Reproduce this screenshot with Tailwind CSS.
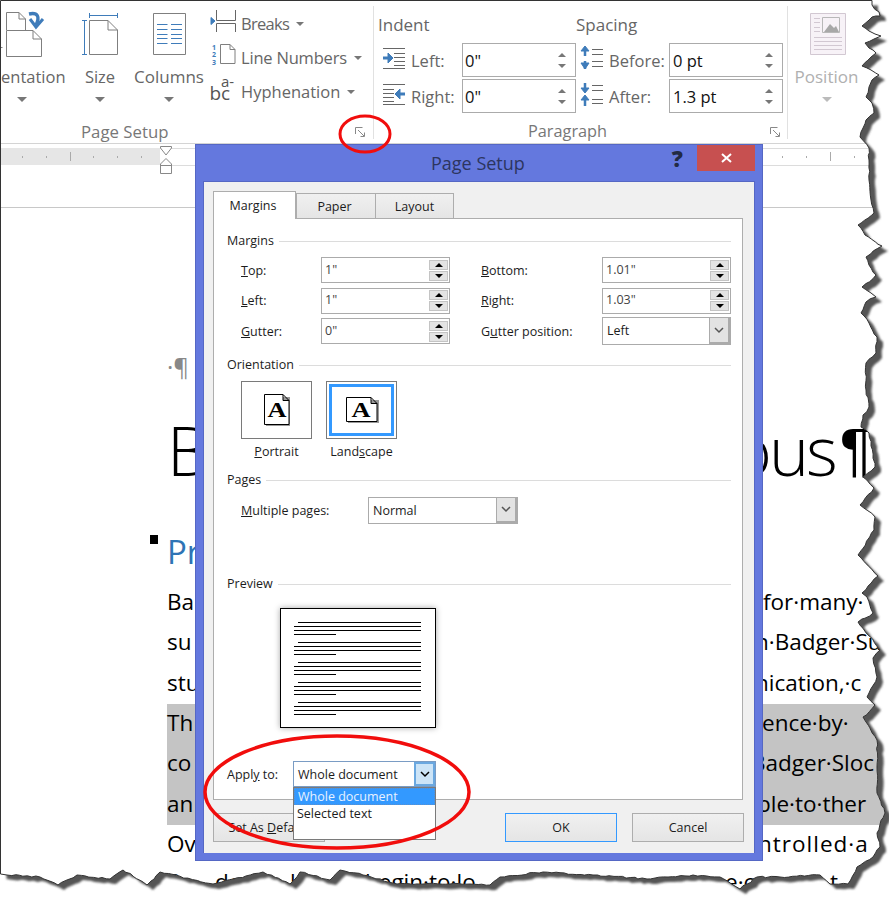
<!DOCTYPE html>
<html lang="en">
<head>
  <meta charset="UTF-8" />
  <title>Page Setup</title>
  <script src="https://cdn.jsdelivr.net/npm/@tailwindcss/browser@4"></script>
</head>
<body class="bg-white">
<div class="relative w-[889px] h-[897px] overflow-hidden bg-white font-['Open_Sans',sans-serif] text-[#1c1c1c]">

  <!-- ribbon -->
  <div class="flex h-[144px] border-b border-[#d4d4d4] text-[#666]">
    <div class="w-[374px] h-[133px] mt-[6px] border-r border-[#e1e1e1] flex flex-col">
      <div class="flex h-[114px]">
        <div class="w-[75px] flex flex-col items-center">
          <svg width="75" height="54" viewBox="0 6 75 54" fill="none" stroke="#7f7f7f">
            <path d="M6.5 30V12.5H19L25.5 19V30M19 12.5V19H25.5M6.5 30.5H33L41.5 39V56.5H6.5ZM33 30.5V39H41.5M0 47.5H2.5"/>
            <path d="M29 14C38 12 40 17 36 25" stroke="#3f7cba" stroke-width="3.4"/>
            <path d="M30 19L36 27L43 19" stroke="#3f7cba" stroke-width="3"/>
          </svg>
          <span class="self-start ml-[1px] mt-[5px] h-[24px] leading-[24px] text-[16.5px]">entation</span>
          <span class="self-start ml-[17px] mt-[8px] w-0 h-0 border-x-[5px] border-x-transparent border-t-[5px] border-t-[#777]"></span>
        </div>
        <div class="w-[50px] flex flex-col items-center">
          <svg width="50" height="54" viewBox="75 6 50 54" fill="none" stroke="#7f7f7f">
            <path d="M89.5 20.5H108L117.5 30V54.5H89.5ZM108 20.5V30H117.5"/>
            <path d="M89.5 13V18M117.5 13V18M89.5 15.5H117.5M82 20.5H87M84.5 20.5V54.5M82 54.5H87" stroke="#3f7cba"/>
          </svg>
          <span class="mt-[5px] h-[24px] leading-[24px] text-[16.5px]">Size</span>
          <span class="mt-[8px] w-0 h-0 border-x-[5px] border-x-transparent border-t-[5px] border-t-[#777]"></span>
        </div>
        <div class="w-[80px] ml-[4px] flex flex-col items-center">
          <svg width="80" height="54" viewBox="129 6 80 54" fill="none" stroke="#7f7f7f">
            <path d="M153.5 13.5H185.5V54.5H153.5Z"/>
            <path d="M157 24.5H167.5M157 29.5H167.5M157 34.5H167.5M157 38.5H167.5M157 43.5H167.5M171 24.5H182M171 29.5H182M171 34.5H182M171 38.5H182M171 43.5H182" stroke="#3f7cba"/>
          </svg>
          <span class="mt-[5px] h-[24px] leading-[24px] text-[17px] whitespace-nowrap">Columns</span>
          <span class="mt-[8px] w-0 h-0 border-x-[5px] border-x-transparent border-t-[5px] border-t-[#777]"></span>
        </div>
        <div class="flex flex-col text-[16.5px] mt-[1px]">
          <div class="flex items-center h-[34px]">
            <svg width="32" height="30" viewBox="209 9 32 30" fill="none" stroke="#666">
              <path d="M216.5 10V20.5H235.5V10M216.5 32V23.5H235.5V32"/>
              <path d="M211 17.5L215 21L211 24.5Z" fill="#3f7cba" stroke="#3f7cba"/>
            </svg>
            <span class="w-[55px] tracking-[-0.7px]">Breaks</span>
            <span class="w-0 h-0 border-x-[4px] border-x-transparent border-t-[4px] border-t-[#777]"></span>
          </div>
          <div class="flex items-center h-[34px]">
            <svg width="32" height="30" viewBox="209 43 32 30" fill="none" stroke="#7f7f7f">
              <path d="M220.5 44.5H230L235 49.5V63.5H220.5ZM230 44.5V49.5H235"/>
              <text x="212" y="50" font-size="7" font-weight="700" fill="#3f7cba" stroke="none">1</text>
              <text x="212" y="57" font-size="7" font-weight="700" fill="#3f7cba" stroke="none">2</text>
              <text x="212" y="65" font-size="7" font-weight="700" fill="#3f7cba" stroke="none">3</text>
            </svg>
            <span class="w-[113px] tracking-[-0.2px]">Line Numbers</span>
            <span class="w-0 h-0 border-x-[4px] border-x-transparent border-t-[4px] border-t-[#777]"></span>
          </div>
          <div class="flex items-center h-[34px]">
            <svg width="32" height="30" viewBox="209 77 32 30" fill="#555">
              <text x="221" y="87" font-size="15">a-</text>
              <text x="209.500" y="100" font-size="19">bc</text>
            </svg>
            <span class="w-[106px]">Hyphenation</span>
            <span class="w-0 h-0 border-x-[4px] border-x-transparent border-t-[4px] border-t-[#777]"></span>
          </div>
        </div>
      </div>
      <div class="flex items-center h-[19px] pt-[4px] text-[#777]">
        <span class="ml-[81px] text-[16.8px]">Page Setup</span>
        <svg class="ml-auto mr-[8px]" width="10" height="10" fill="none" stroke="#888"><path d="M.5 7V.5H7.5M3 3L9 9M5.5 9.500H9.500V5.500"/></svg>
      </div>
    </div>

    <div class="w-[414px] h-[133px] mt-[6px] border-r border-[#e1e1e1] flex flex-col">
      <div class="h-[114px] pl-[4px]">
        <div class="flex h-[37px] items-center text-[17px]">
          <span class="w-[198px]">Indent</span><span>Spacing</span>
        </div>
        <div class="grid grid-cols-[33px_51px_114px_33px_60px_114px] grid-rows-[34px_34px] gap-y-[2px] text-[16.5px] items-center">
          <svg width="33" height="34" fill="none" stroke="#666"><path d="M5 5.500H27M16 10.500H27M16 14.500H27M16 18.500H27M16 22.500H27M5 25.500H27"/><path d="M5 15H13" stroke="#3f7cba" stroke-width="3"/><path d="M10 10L15 15L10 20Z" fill="#3f7cba" stroke="#3f7cba"/></svg>
          <span class="pt-[2px]">Left:</span>
          <div class="flex h-[34px] items-center border border-[#ababab] bg-white">
            <span class="flex-1 pl-[2px] pt-[2px] text-[#111]">0"</span>
            <div class="flex flex-col gap-[7px] mr-[9px]">
              <span class="w-0 h-0 border-x-[4px] border-x-transparent border-b-[4px] border-b-[#777]"></span>
              <span class="w-0 h-0 border-x-[4px] border-x-transparent border-t-[4px] border-t-[#777]"></span>
            </div>
          </div>
          <svg width="33" height="34" fill="none" stroke="#666"><path d="M16 6.500H27M16 11.500H27M16 18.500H27M16 23.500H27"/><path d="M9 6V13M9 18V26" stroke="#3f7cba" stroke-width="2.500"/><path d="M5 8L9 3L13 8ZM5 20L9 26L13 20Z" fill="#3f7cba" stroke="#3f7cba"/></svg>
          <span class="pt-[2px]">Before:</span>
          <div class="flex h-[34px] items-center border border-[#ababab] bg-white">
            <span class="flex-1 pl-[3px] pt-[2px] text-[#111]">0 pt</span>
            <div class="flex flex-col gap-[7px] mr-[9px]">
              <span class="w-0 h-0 border-x-[4px] border-x-transparent border-b-[4px] border-b-[#777]"></span>
              <span class="w-0 h-0 border-x-[4px] border-x-transparent border-t-[4px] border-t-[#777]"></span>
            </div>
          </div>

          <svg width="33" height="34" fill="none" stroke="#666"><path d="M5 5.500H27M5 10.500H16M5 14.500H16M5 18.500H16M5 22.500H16M5 25.500H27"/><path d="M19 15H27" stroke="#3f7cba" stroke-width="3"/><path d="M22 10L17 15L22 20Z" fill="#3f7cba" stroke="#3f7cba"/></svg>
          <span class="pt-[2px]">Right:</span>
          <div class="flex h-[34px] items-center border border-[#ababab] bg-white">
            <span class="flex-1 pl-[2px] pt-[2px] text-[#111]">0"</span>
            <div class="flex flex-col gap-[7px] mr-[9px]">
              <span class="w-0 h-0 border-x-[4px] border-x-transparent border-b-[4px] border-b-[#777]"></span>
              <span class="w-0 h-0 border-x-[4px] border-x-transparent border-t-[4px] border-t-[#777]"></span>
            </div>
          </div>
          <svg width="33" height="34" fill="none" stroke="#666"><path d="M16 6.500H27M16 11.500H27M16 20.500H27M16 24.500H27"/><path d="M9 4V11M9 18V27" stroke="#3f7cba" stroke-width="2.500"/><path d="M5 9L9 14L13 9ZM5 21L9 16L13 21Z" fill="#3f7cba" stroke="#3f7cba"/></svg>
          <span class="pt-[2px]">After:</span>
          <div class="flex h-[34px] items-center border border-[#ababab] bg-white">
            <span class="flex-1 pl-[3px] pt-[2px] text-[#111]">1.3 pt</span>
            <div class="flex flex-col gap-[7px] mr-[9px]">
              <span class="w-0 h-0 border-x-[4px] border-x-transparent border-b-[4px] border-b-[#777]"></span>
              <span class="w-0 h-0 border-x-[4px] border-x-transparent border-t-[4px] border-t-[#777]"></span>
            </div>
          </div>
        </div>
      </div>
      <div class="flex items-center h-[19px] pt-[4px] text-[#777]">
        <span class="ml-[154px] text-[16.3px]">Paragraph</span>
        <svg class="ml-auto mr-[7px]" width="10" height="10" fill="none" stroke="#888"><path d="M.5 7V.5H7.5M3 3L9 9M5.5 9.500H9.500V5.500"/></svg>
      </div>
    </div>

    <div class="w-[77px] h-[133px] mt-[6px] flex flex-col items-center text-[#b0b0b0]">
      <svg width="77" height="54" viewBox="787 6 77 54" fill="none" stroke="#d2c8d2">
        <path d="M809.500 13.500H844.500V54.500H809.500Z" fill="#f7f2f7"/>
        <path d="M821.500 17.500H838.500V32.500H821.500Z" fill="#f7f2f7" stroke="#b8b8b8"/>
        <path d="M823 32L829 24L833 28L835 26L838 32Z" fill="#a8a8a8" stroke="none"/>
        <path d="M813 18.500H819M813 22.500H819M813 27.500H819M813 31.500H819M813 37.500H841M813 41.500H841M813 45.500H841M813 49.500H841"/>
      </svg>
      <span class="mt-[5px] h-[24px] leading-[24px] text-[17px]">Position</span>
      <span class="mt-[8px] w-0 h-0 border-x-[5px] border-x-transparent border-t-[5px] border-t-[#bbb]"></span>
    </div>
  </div>

  <!-- ruler -->
  <svg class="block" width="889" height="30" viewBox="0 144 889 30">
    <rect x="0" y="148" width="160" height="17" fill="#e6e6e6"/>
    <path d="M160 148.500H889M160 165.500H889" stroke="#dcdcdc" fill="none"/>
    <path d="M22.500 156V158M46.500 156V158M70.500 152V161M93.500 156V158M117.500 156V158M141.500 156V158M782.500 156V158M806.500 156V158M830.500 152V161M854.500 156V158" stroke="#aaa"/>
    <path d="M160.500 146.500H171.500V148L166 155L160.500 148ZM166 158.500L171.500 164V173.500H160.500V164ZM160.500 165.500H171.500" fill="#fff" stroke="#888"/>
  </svg>
  <div class="h-[34px] border-b border-[#c8c8c8]"></div>

  <!-- document -->
  <div class="text-black whitespace-nowrap">
    <div class="pl-[167px] mt-[144px] h-[30px] leading-[30px] text-[24px] text-[#888]">·¶</div>
    <div class="flex pl-[167px] mt-[28px] h-[80px] leading-[80px] text-[68px] font-light">
      <span class="w-[565px] shrink-0">B</span><span class="shrink-0 tracking-[-3px]">ous</span><span class="shrink-0 ml-[5px] font-normal font-['Liberation_Sans',sans-serif] text-[60px]">¶</span>
    </div>
    <div class="flex items-center pl-[150px] mt-[42px] h-[40px]">
      <span class="self-start mt-[3px] w-[8px] h-[9px] bg-black"></span>
      <span class="ml-[9px] text-[33px] text-[#2e74b5]">Pr</span>
    </div>
    <div class="mt-[11px] text-[22.5px] leading-[38px]">
      <div class="flex h-[40.33px] ml-[167px]"><span class="w-[596px]">Ba</span><span>for·many·</span></div>
      <div class="flex h-[40.33px] ml-[167px]"><span class="w-[588px]">su</span><span>n·Badger·Su</span></div>
      <div class="flex h-[40.33px] ml-[167px]"><span class="w-[588px]">stu</span><span>nication,·c</span></div>
      <div class="flex h-[40.33px] ml-[167px] bg-[#c4c4c4]"><span class="w-[595px]">Th</span><span>ence·by·</span></div>
      <div class="flex h-[40.33px] ml-[167px] bg-[#c4c4c4]"><span class="w-[584px]">co</span><span>Badger·Sloc</span></div>
      <div class="flex h-[40.33px] ml-[167px] bg-[#c4c4c4]"><span class="w-[590px]">an</span><span>ble·to·ther</span></div>
      <div class="flex h-[40.33px] ml-[167px]"><span class="w-[591px]">Ov</span><span class="tracking-[1px]">ntrolled·a</span></div>
      <div class="flex h-[40.33px] ml-[167px] mt-[-2px]"><span class="w-[48px]">S</span><span class="w-[75px]">de</span><span class="w-[75px]">k</span><span class="w-[360px]">begin·to·lo</span><span class="w-[105px]">e·c</span><span>t</span></div>
    </div>
  </div>

  <!-- page setup dialog -->
  <div class="absolute left-[195px] top-[144px] w-[568px] h-[717px] flex flex-col bg-[#6478de] border border-[#5567c4] text-[12.5px] text-[#1c1c1c]">
    <div class="flex h-[36px] shrink-0">
      <span class="ml-[235px] mt-[5px] text-[18px] text-[#2c3560]">Page Setup</span>
      <span class="ml-[147px] mt-[-3px] text-[22px] font-extrabold text-[#222a44]">?</span>
      <div class="ml-auto mr-[7px] w-[58px] h-[26px] bg-[#c75050] flex items-center justify-center">
        <svg width="11" height="10" stroke="#fff" stroke-width="2"><path d="M1 1L10 9M10 1L1 9"/></svg>
      </div>
    </div>
    <div class="mx-[7px] w-[552px] h-[672px] bg-[#f0f0f0] border-t border-x border-[#5567c4] px-[9px] pt-[9px]">
      <div class="flex items-end h-[27px]">
        <div class="relative z-10 w-[83px] h-[28px] mb-[-1px] flex items-center justify-center pt-[1px] pr-[3px] bg-white border border-b-0 border-[#adadad]">Margins</div>
        <div class="w-[80px] h-[25px] flex items-center justify-center pt-[2px] pr-[3px] bg-gradient-to-b from-[#f0f0f0] to-[#e5e5e5] border border-b-0 border-[#adadad]">Paper</div>
        <div class="w-[79px] h-[25px] ml-[-1px] flex items-center justify-center pt-[2px] bg-gradient-to-b from-[#f0f0f0] to-[#e5e5e5] border border-b-0 border-[#adadad]">Layout</div>
      </div>
      <div class="w-[530px] h-[582px] bg-white border border-[#adadad] pl-[13px] pr-[11px]">

        <div class="flex items-center h-[20px] mt-[12px]"><span>Margins</span><span class="flex-1 ml-[5px] h-px bg-[#dcdcdc]"></span></div>
        <div class="grid grid-cols-[80px_129px_31px_121px_129px] grid-rows-[26px_26px_26px] gap-y-[4.500px] mt-[6px] pl-[14px] items-center [&>span]:pt-[2px]">
          <span><u>T</u>op:</span>
          <div class="flex h-[26px] items-center border border-[#ababab] bg-white">
            <span class="flex-1 pl-[3px] text-[#444]">1"</span>
            <div class="flex flex-col gap-[1px] mr-[1px]">
              <span class="flex items-center justify-center w-[19px] h-[10px] bg-[#e3e3e3] border border-[#c4c4c4]"><span class="w-0 h-0 border-x-[4px] border-x-transparent border-b-[4px] border-b-black"></span></span>
              <span class="flex items-center justify-center w-[19px] h-[10px] bg-[#e3e3e3] border border-[#c4c4c4]"><span class="w-0 h-0 border-x-[4px] border-x-transparent border-t-[4px] border-t-black"></span></span>
            </div>
          </div>
          <span></span>
          <span><u>B</u>ottom:</span>
          <div class="flex h-[26px] items-center border border-[#ababab] bg-white">
            <span class="flex-1 pl-[3px] text-[#444]">1.01"</span>
            <div class="flex flex-col gap-[1px] mr-[1px]">
              <span class="flex items-center justify-center w-[19px] h-[10px] bg-[#e3e3e3] border border-[#c4c4c4]"><span class="w-0 h-0 border-x-[4px] border-x-transparent border-b-[4px] border-b-black"></span></span>
              <span class="flex items-center justify-center w-[19px] h-[10px] bg-[#e3e3e3] border border-[#c4c4c4]"><span class="w-0 h-0 border-x-[4px] border-x-transparent border-t-[4px] border-t-black"></span></span>
            </div>
          </div>

          <span><u>L</u>eft:</span>
          <div class="flex h-[26px] items-center border border-[#ababab] bg-white">
            <span class="flex-1 pl-[3px] text-[#444]">1"</span>
            <div class="flex flex-col gap-[1px] mr-[1px]">
              <span class="flex items-center justify-center w-[19px] h-[10px] bg-[#e3e3e3] border border-[#c4c4c4]"><span class="w-0 h-0 border-x-[4px] border-x-transparent border-b-[4px] border-b-black"></span></span>
              <span class="flex items-center justify-center w-[19px] h-[10px] bg-[#e3e3e3] border border-[#c4c4c4]"><span class="w-0 h-0 border-x-[4px] border-x-transparent border-t-[4px] border-t-black"></span></span>
            </div>
          </div>
          <span></span>
          <span><u>R</u>ight:</span>
          <div class="flex h-[26px] items-center border border-[#ababab] bg-white">
            <span class="flex-1 pl-[3px] text-[#444]">1.03"</span>
            <div class="flex flex-col gap-[1px] mr-[1px]">
              <span class="flex items-center justify-center w-[19px] h-[10px] bg-[#e3e3e3] border border-[#c4c4c4]"><span class="w-0 h-0 border-x-[4px] border-x-transparent border-b-[4px] border-b-black"></span></span>
              <span class="flex items-center justify-center w-[19px] h-[10px] bg-[#e3e3e3] border border-[#c4c4c4]"><span class="w-0 h-0 border-x-[4px] border-x-transparent border-t-[4px] border-t-black"></span></span>
            </div>
          </div>

          <span><u>G</u>utter:</span>
          <div class="flex h-[26px] items-center border border-[#ababab] bg-white">
            <span class="flex-1 pl-[3px] text-[#444]">0"</span>
            <div class="flex flex-col gap-[1px] mr-[1px]">
              <span class="flex items-center justify-center w-[19px] h-[10px] bg-[#e3e3e3] border border-[#c4c4c4]"><span class="w-0 h-0 border-x-[4px] border-x-transparent border-b-[4px] border-b-black"></span></span>
              <span class="flex items-center justify-center w-[19px] h-[10px] bg-[#e3e3e3] border border-[#c4c4c4]"><span class="w-0 h-0 border-x-[4px] border-x-transparent border-t-[4px] border-t-black"></span></span>
            </div>
          </div>
          <span></span>
          <span>G<u>u</u>tter position:</span>
          <div class="flex h-[28px] items-center border border-[#ababab] bg-white">
            <span class="flex-1 pl-[4px]">Left</span>
            <div class="flex items-center justify-center w-[21px] h-full bg-[#e3e3e3] border-l border-b-2 border-r-2 border-[#ababab]">
              <svg width="10" height="7" fill="none" stroke="#555" stroke-width="1.500"><path d="M1 1L5 5L9 1"/></svg>
            </div>
          </div>
        </div>

        <div class="flex items-center h-[20px] mt-[11px]"><span>Orientation</span><span class="flex-1 ml-[5px] h-px bg-[#dcdcdc]"></span></div>
        <div class="flex mt-[6px] pl-[14px] gap-[14px]">
          <div class="flex flex-col items-center w-[71px]">
            <div class="flex items-center justify-center w-[71px] h-[58px] border border-[#7a7a7a]">
              <svg width="28" height="34" fill="#fff" stroke="#000">
                <path d="M3 4H27V33H3Z" fill="#999" stroke="none"/>
                <path d="M1.500 1.500H20L26 7.500V31.500H1.500ZM20 1.500V7.500H26"/>
                <text x="4.500" y="24" font-family="'Liberation Serif',serif" font-weight="700" font-size="22" textLength="19" lengthAdjust="spacingAndGlyphs" fill="#000" stroke="none">A</text>
              </svg>
            </div>
            <span class="mt-[4px] leading-[18px]"><u>P</u>ortrait</span>
          </div>
          <div class="flex flex-col items-center w-[71px]">
            <div class="flex items-center justify-center w-[71px] h-[58px] border border-[#7a7a7a] p-[2px]">
              <div class="flex items-center justify-center w-full h-full border-[3px] border-[#3399ff]">
                <svg width="34" height="28" fill="#fff" stroke="#000">
                  <path d="M3 4H34V27H3Z" fill="#999" stroke="none"/>
                  <path d="M1.500 1.500H26L32 7.500V25.500H1.500ZM26 1.500V7.500H32"/>
                  <text x="6.500" y="21" font-family="'Liberation Serif',serif" font-weight="700" font-size="22" textLength="19" lengthAdjust="spacingAndGlyphs" fill="#000" stroke="none">A</text>
                </svg>
              </div>
            </div>
            <span class="mt-[4px] leading-[18px] whitespace-nowrap">Land<u>s</u>cape</span>
          </div>
        </div>

        <div class="flex items-center h-[20px] mt-[9px]"><span>Pages</span><span class="flex-1 ml-[5px] h-px bg-[#dcdcdc]"></span></div>
        <div class="flex items-center mt-[7px] pl-[14px]">
          <span class="w-[127px] pt-[2px]"><u>M</u>ultiple pages:</span>
          <div class="flex w-[150px] h-[27px] items-center border border-[#ababab] bg-white">
            <span class="flex-1 pl-[4px] pt-[2px]">Normal</span>
            <div class="flex items-center justify-center w-[21px] h-full bg-[#e3e3e3] border-l border-b-2 border-r-2 border-[#ababab]">
              <svg width="10" height="7" fill="none" stroke="#555" stroke-width="1.500"><path d="M1 1L5 5L9 1"/></svg>
            </div>
          </div>
        </div>

        <div class="flex items-center h-[20px] mt-[50px]"><span>Preview</span><span class="flex-1 ml-[5px] h-px bg-[#dcdcdc]"></span></div>
        <svg class="block mt-[14px] ml-[53px] overflow-visible shadow-[0_0_6px_rgba(0,0,0,0.35)]" width="156" height="120" viewBox="280 608 156 120" fill="none" stroke="#000">
          <rect x="280.500" y="608.500" width="155" height="119" fill="#fff"/>
          <path d="M298 622.500H421M294 626.500H421M294 630.500H421M294 634.500H336M298 642.500H421M294 646.500H421M294 650.500H421M294 654.500H336M298 662.500H421M294 666.500H421M294 670.500H421M294 674.500H336M298 682.500H421M294 686.500H421M294 690.500H421M294 694.500H336M298 702.500H421M294 706.500H421M294 710.500H421M294 714.500H336"/>
        </svg>

        <div class="flex items-center mt-[33px]">
          <span class="w-[66px] pt-[2px]">Appl<u>y</u> to:</span>
          <div class="relative flex w-[143px] h-[26px] items-center border border-[#7a9cc4] bg-white">
            <span class="flex-1 pl-[4px] pt-[2px]">Whole document</span>
            <div class="flex items-center justify-center w-[21px] h-full bg-[#cce4f7] border-2 border-[#6aa8e0]">
              <svg width="10" height="7" fill="none" stroke="#000" stroke-width="1.500"><path d="M1 1L5 5L9 1"/></svg>
            </div>
            <div class="absolute z-20 left-[-1px] top-[25px] w-[143px] h-[53px] bg-white border border-[#7a7a7a]">
              <div class="h-[17px] leading-[15px] pl-[3px] bg-[#3399ff] text-[#e8f2ff] border border-dotted border-[#5f8fc8]">Whole document</div>
              <div class="h-[17px] leading-[17px] pl-[3px]">Selected text</div>
            </div>
          </div>
        </div>
      </div>

      <div class="flex mt-[13px]">
        <div class="w-[112px] h-[29px] pt-[2px] flex items-center justify-center bg-gradient-to-b from-[#f0f0f0] to-[#e5e5e5] border border-[#adadad]"><span>Set As <u>D</u>efault</span></div>
        <div class="w-[112px] h-[29px] pt-[2px] ml-[180px] flex items-center justify-center bg-gradient-to-b from-[#f0f0f0] to-[#e5e5e5] border border-[#3399ff]">OK</div>
        <div class="w-[112px] h-[29px] pt-[2px] ml-[15px] flex items-center justify-center bg-gradient-to-b from-[#f0f0f0] to-[#e5e5e5] border border-[#adadad]">Cancel</div>
      </div>
    </div>
  </div>

  <!-- red callouts -->
  <svg class="absolute inset-0 z-30 pointer-events-none" width="889" height="897" fill="none" stroke="#f10d0c">
    <ellipse cx="365" cy="134" rx="25" ry="18" stroke-width="3"/>
    <ellipse cx="337" cy="792" rx="132" ry="56" stroke-width="3.500"/>
  </svg>

  <!-- torn page edge -->
  <svg class="absolute inset-0 z-40 pointer-events-none" width="889" height="897">
    <defs>
      <filter id="soft" x="-5%" y="-5%" width="110%" height="110%"><feGaussianBlur stdDeviation="1.200"/></filter>
      <clipPath id="outside"><path id="clipShape" clip-rule="evenodd"/></clipPath>
    </defs>
    <path id="outsideFill" fill="#fff" fill-rule="evenodd"/>
    <g clip-path="url(#outside)"><path id="shadow" fill="#555" filter="url(#soft)" transform="translate(6 5)"/></g>
    <path id="edge" fill="none" stroke="#333" stroke-width="1"/>
  </svg>
</div>

<script>
  // hand-traced tear, roughened a little so it doesn't look like a polygon
  const tear = [[872,.5],[872,5],[879,12],[880,16],[872,17],[862,26],[869,31],[875,34],[881,36],[874,39],[865,43],[869,48],[876,53],[871,57],[862,66],[871,70],[879,75],[872,80],[869,87],[866,97],[872,103],[874,113],[866,120],[863,128],[860,137],[869,148],[869,160],[869,180],[871,200],[874,213],[858,225],[865,235],[882,246],[866,257],[869,265],[876,275],[862,287],[871,293],[876,297],[866,302],[861,313],[869,323],[877,337],[876,353],[866,363],[866,390],[869,407],[863,415],[861,427],[869,433],[875,467],[863,477],[874,488],[860,505],[875,517],[874,530],[858,555],[878,576],[862,593],[867,597],[873,613],[858,622],[880,650],[873,658],[877,677],[867,697],[875,705],[863,717],[877,740],[877,767],[877,793],[885,813],[877,833],[880,847],[873,857],[857,867],[848,884],[830,884],[820,875],[780,877],[757,877],[740,889],[720,877],[693,875],[647,879],[593,875],[543,872],[500,877],[490,885],[470,884],[450,884],[397,884],[363,875],[340,870],[330,880],[300,872],[290,884],[263,872],[213,884],[160,872],[147,885],[123,870],[110,879],[77,875],[58,885],[40,877],[7,875],[.5,874]];
  let seed = 7;
  const rnd = () => (seed = (seed * 16807) % 2147483647) / 2147483647 - 0.5;
  const pts = [[.5,.5]];
  tear.forEach((p, i) => {
    const prev = tear[i - 1];
    if (prev) {
      const steps = Math.floor(Math.hypot(p[0] - prev[0], p[1] - prev[1]) / 4);
      for (let s = 1; s < steps; s++) {
        const t = s / steps;
        pts.push([prev[0] + (p[0] - prev[0]) * t + rnd() * 1.6, prev[1] + (p[1] - prev[1]) * t + rnd() * 1.6]);
      }
    }
    pts.push(p);
  });
  const page = "M" + pts.map(p => p[0].toFixed(1) + " " + p[1].toFixed(1)).join("L") + "Z";
  const outer = "M-1 -1H890V898H-1Z";
  document.getElementById("clipShape").setAttribute("d", outer + page);
  document.getElementById("outsideFill").setAttribute("d", outer + page);
  document.getElementById("shadow").setAttribute("d", page);
  document.getElementById("edge").setAttribute("d", page);
</script>
</body>
</html>
